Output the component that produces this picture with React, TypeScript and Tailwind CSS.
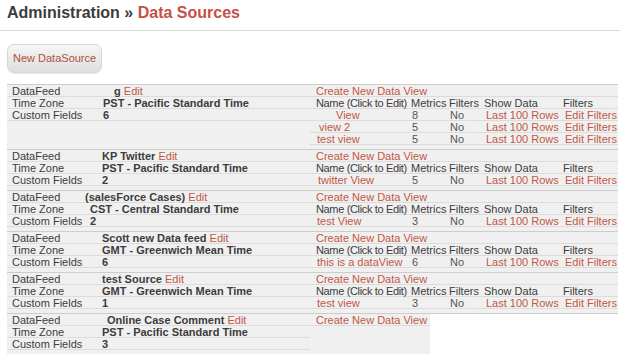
import React from 'react';

type View = { name: string; metrics: string; indent: string };
type Source = {
  name: string;
  tz: string;
  fields: string;
  labelW: string;
  nameOffset: string;
  views: View[];
  noHeader?: boolean;
};

const sources: Source[] = [
  {
    name: 'g',
    tz: 'PST - Pacific Standard Time',
    fields: '6',
    labelW: 'w-[96px]',
    nameOffset: 'ml-[11px]',
    views: [
      { name: 'View', metrics: '8', indent: 'pl-[20px]' },
      { name: 'view 2', metrics: '5', indent: 'pl-[3px]' },
      { name: 'test view', metrics: '5', indent: 'pl-[1px]' },
    ],
  },
  {
    name: 'KP Twitter',
    tz: 'PST - Pacific Standard Time',
    fields: '2',
    labelW: 'w-[95px]',
    nameOffset: 'ml-0',
    views: [{ name: 'twitter View', metrics: '5', indent: 'pl-[2px]' }],
  },
  {
    name: '(salesForce Cases)',
    tz: 'CST - Central Standard Time',
    fields: '2',
    labelW: 'w-[83px]',
    nameOffset: '-ml-[5px]',
    views: [{ name: 'test View', metrics: '3', indent: 'pl-[1px]' }],
  },
  {
    name: 'Scott new Data feed',
    tz: 'GMT - Greenwich Mean Time',
    fields: '6',
    labelW: 'w-[95px]',
    nameOffset: 'ml-0',
    views: [{ name: 'this is a dataView', metrics: '6', indent: 'pl-[1px]' }],
  },
  {
    name: 'test Source',
    tz: 'GMT - Greenwich Mean Time',
    fields: '1',
    labelW: 'w-[95px]',
    nameOffset: 'ml-0',
    views: [{ name: 'test view', metrics: '3', indent: 'pl-[1px]' }],
  },
  {
    name: 'Online Case Comment',
    tz: 'PST - Pacific Standard Time',
    fields: '3',
    labelW: 'w-[95px]',
    nameOffset: 'ml-[5px]',
    views: [],
    noHeader: true,
  },
];

const row = 'h-[12px] leading-[13px] border-b border-[#dcdcdc] whitespace-nowrap';
const link = 'text-[#c05845]';
const cols = 'grid grid-cols-[95px_38px_35px_79px_1fr] pl-[6px]';

const SourceBlock = ({ s }: { s: Source }) => (
  <div className="flex border-t border-[#cdcdcd]">
    <div className="w-[303px] bg-[#f0f0f0] pb-[4px]">
      <div className={`${row} flex`}>
        <div className={`${s.labelW} pl-[5px]`}>DataFeed</div>
        <div className={s.nameOffset}>
          <span className="font-bold">{s.name}</span> <span className={link}>Edit</span>
        </div>
      </div>
      <div className={`${row} flex`}>
        <div className={`${s.labelW} pl-[5px]`}>Time Zone</div>
        <div className="font-bold">{s.tz}</div>
      </div>
      <div className={`${row} flex`}>
        <div className={`${s.labelW} pl-[5px]`}>Custom Fields</div>
        <div className="font-bold">{s.fields}</div>
      </div>
    </div>
    <div className="flex-1 flex">
      <div className={`${s.noHeader ? 'w-[120px]' : 'flex-1'} bg-[#f0f0f0] pb-[4px]`}>
        <div className={`${row} pl-[6px] ${link}`}>Create New Data View</div>
        {!s.noHeader && (
          <div className={`${row} ${cols}`}>
            <div className="tracking-[-0.35px]">Name (Click to Edit)</div>
            <div>Metrics</div>
            <div>Filters</div>
            <div>Show Data</div>
            <div>Filters</div>
          </div>
        )}
        {s.views.map((v) => (
          <div key={v.name + v.metrics} className={`${row} ${cols}`}>
            <div className={`${link} ${v.indent}`}>{v.name}</div>
            <div className="pl-[1px] text-[#555]">{v.metrics}</div>
            <div className="pl-[1px] text-[#555]">No</div>
            <div className={`${link} pl-[2px]`}>Last 100 Rows</div>
            <div className={`${link} pl-[2px]`}>Edit Filters</div>
          </div>
        ))}
      </div>
    </div>
  </div>
);

export default function App() {
  return (
    <div className="w-[620px] h-[362px] overflow-hidden bg-white font-['Liberation_Sans',Arial,sans-serif] text-[#3c3c3c]">
      <h1 className="pl-[7px] pt-[3px] h-[31px] text-[16px] leading-[20px] font-bold border-b border-[#d9d9d9]">
        Administration » <span className="text-[#c84f47]">Data Sources</span>
      </h1>
      <div className="pl-[7px] pt-[13px]">
        <button className="h-[29px] px-[5px] rounded-[7px] border border-[#d6d6d6] bg-gradient-to-b from-[#f6f6f6] to-[#dedede] text-[11px] text-[#b0503d] shadow-[0_1px_1px_rgba(0,0,0,0.08)]">
          New DataSource
        </button>
      </div>
      <div className="pl-[7px] pr-[2px] pt-[11px] text-[11px]">
        {sources.map((s) => (
          <SourceBlock key={s.name} s={s} />
        ))}
      </div>
    </div>
  );
}
